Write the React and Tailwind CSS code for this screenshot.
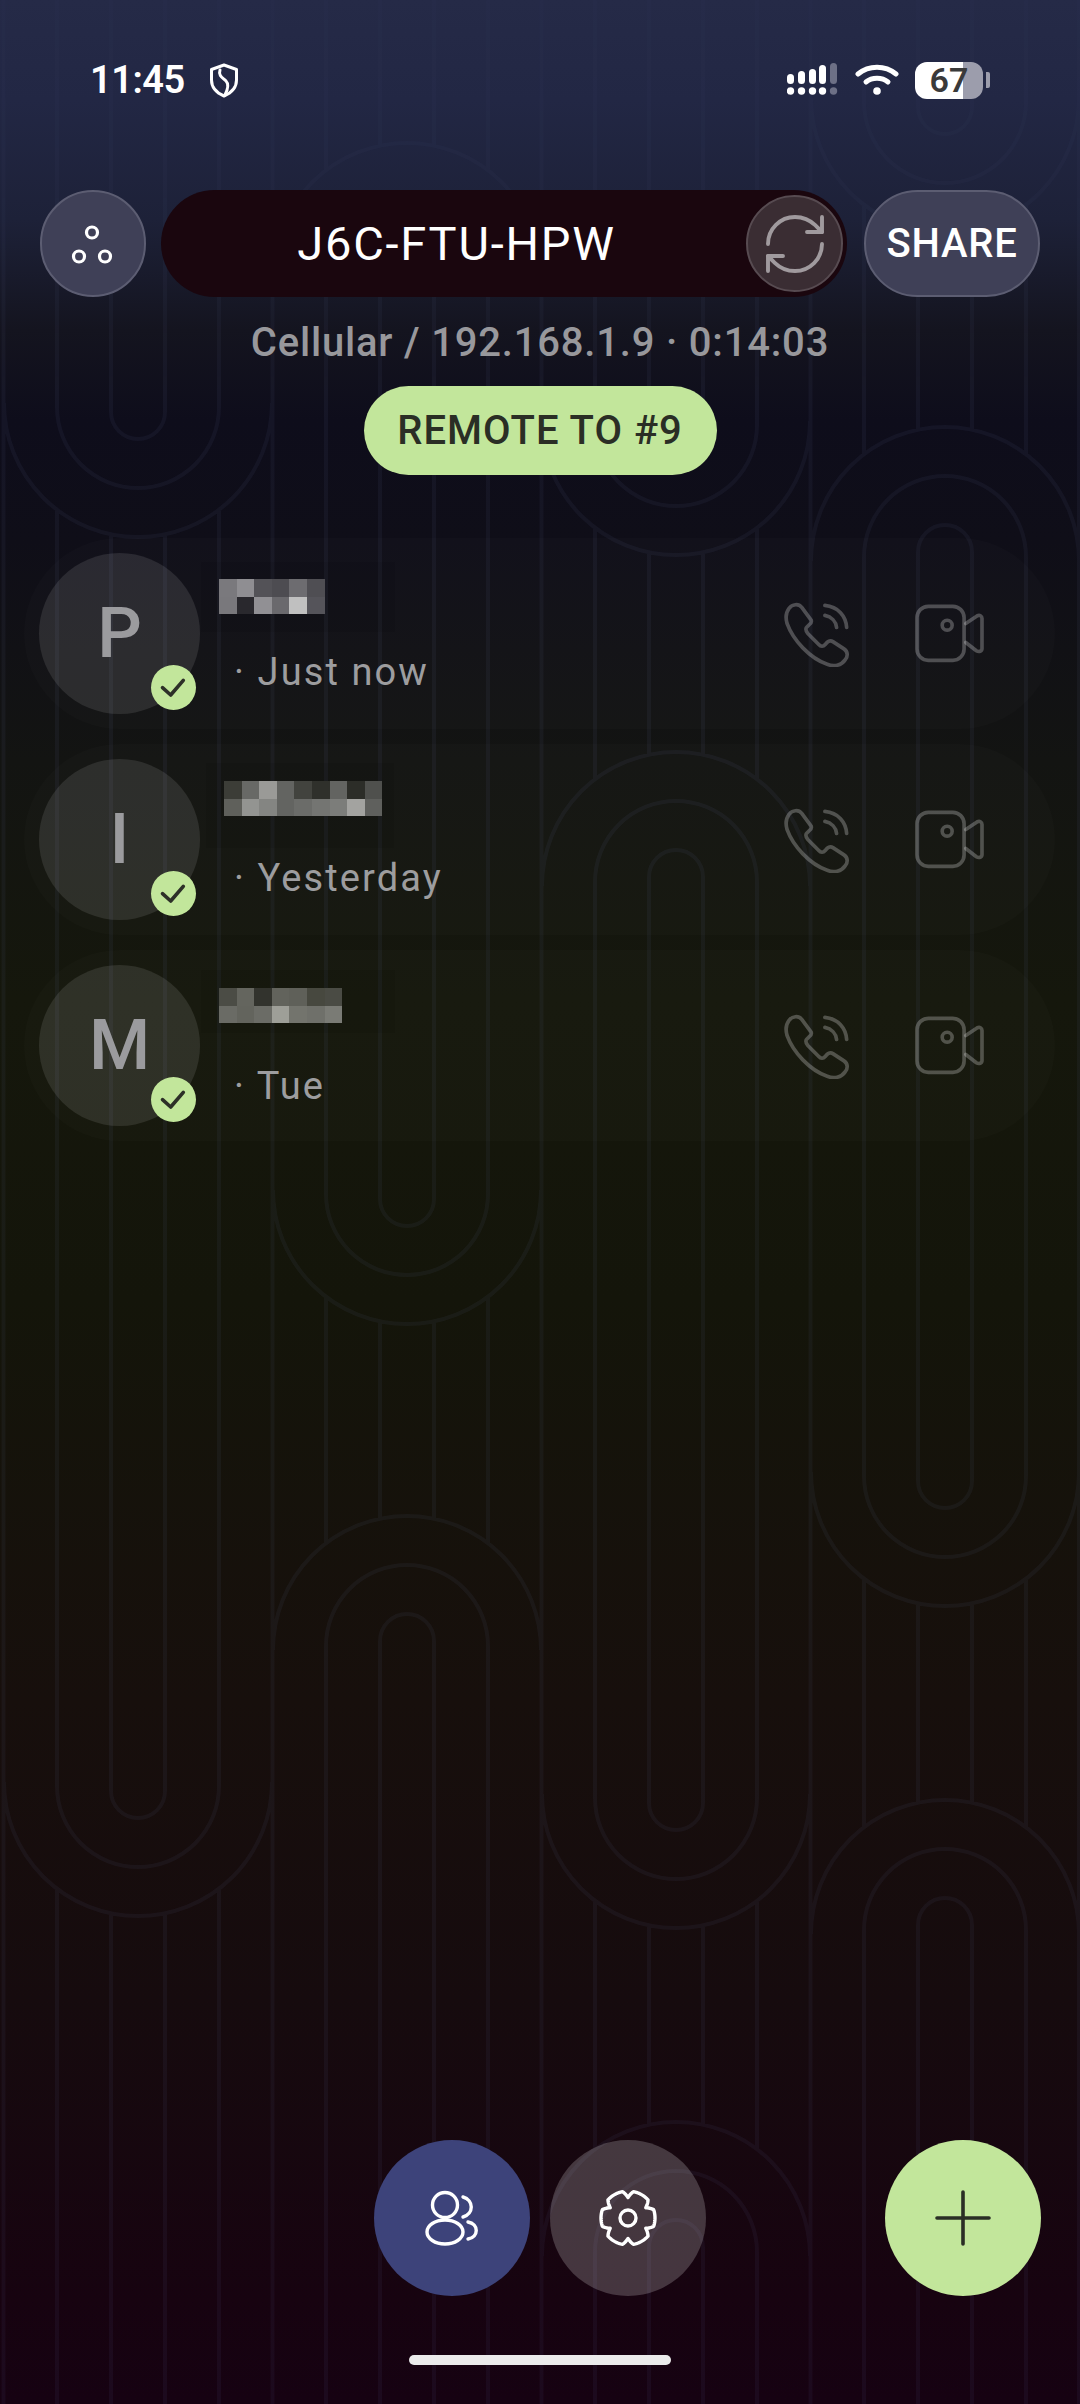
import { RefreshCw } from "lucide-react";

const PAGE_H = 2404;
const OUTER = 134;
// inner arcs are pulled up a little compared to the outer one
const ARCS = [
  { r: 134, k: 0 },
  { r: 81, k: 49 },
  { r: 27, k: 98 },
];
const COLUMNS = [
  { cx: 138, parts: [["U", 537], ["U", 1916]] },
  { cx: 407, parts: [["n", 143], ["U", 1324], ["n", 1516]] },
  { cx: 676, parts: [["U", 555], ["n", 752], ["U", 1928], ["n", 2122]] },
  { cx: 945, parts: [["U", 232], ["n", 427], ["U", 1606], ["n", 1800]] },
];

const buildPattern = () => {
  let d = "";
  [3.5, 272.5, 541.5, 810.5, 1079].forEach((x) => {
    d += `M${x} 0V${PAGE_H}`;
  });
  COLUMNS.forEach(({ cx, parts }) => {
    parts.forEach(([type, y]) => {
      ARCS.forEach(({ r, k }) => {
        const yc = type === "U" ? y - k - r : y + k + r;
        d += `M${cx - r} ${yc}A${r} ${r} 0 0 ${type === "U" ? 0 : 1} ${cx + r} ${yc}`;
      });
    });
    ARCS.slice(1).forEach(({ r, k }) => {
      const drop = OUTER - Math.sqrt(OUTER * OUTER - r * r);
      let cur = 0;
      parts.forEach(([type, y]) => {
        const end = type === "U" ? y - k - r : y + drop;
        d += `M${cx - r} ${cur}V${end}M${cx + r} ${cur}V${end}`;
        cur = type === "U" ? y - drop : y + k + r;
      });
      d += `M${cx - r} ${cur}V${PAGE_H}M${cx + r} ${cur}V${PAGE_H}`;
    });
  });
  return d;
};

const gearPath = () => {
  const pts = [];
  for (let i = 0; i < 180; i++) {
    const a = (i / 180) * Math.PI * 2;
    const r = Math.min(27, 20.5 + 11 * Math.abs(Math.cos(3 * a)));
    pts.push(`${(30 + r * Math.cos(a)).toFixed(2)} ${(30 + r * Math.sin(a)).toFixed(2)}`);
  }
  return `M${pts.join("L")}Z`;
};

const PhoneIcon = () => (
  <svg width="67" height="67" viewBox="130 180 200 200" fill="none" className="stroke-white/25" strokeWidth="11" strokeLinecap="round" strokeLinejoin="round">
    <path d="M148 205C158 192 176 190 186 202L214 240C216 246 214 250 208 254L200 262C196 268 198 272 204 280L236 312C243 320 250 320 256 313L262 306C268 301 274 301 280 305L312 326C324 334 324 348 316 358C304 376 282 380 262 372C210 354 160 300 142 250C137 232 138 218 148 205Z" />
    <path d="M255 196C295 200 318 228 320 262" />
    <path d="M255 226C275 230 288 244 290 262" />
  </svg>
);

const VideoIcon = () => (
  <svg width="72" height="63" viewBox="520 190 215 190" fill="none" className="stroke-white/25" strokeWidth="11" strokeLinecap="round" strokeLinejoin="round">
    <rect x="531" y="203" width="142" height="163" rx="34" />
    <circle cx="622" cy="260" r="15" />
    <path d="M678 255L712 232C720 228 727 232 727 240V330C727 338 718 342 710 337L678 312" />
  </svg>
);

const Pixels = ({ colors, cols, className }) => (
  <div className={`grid grid-rows-2 h-[35px] ${className}`} style={{ gridTemplateColumns: `repeat(${cols}, 17.6px)` }}>
    {colors.map((c, i) => (
      <div key={i} style={{ backgroundColor: c }} />
    ))}
  </div>
);

const contacts = [
  {
    letter: "P",
    when: "Just now",
    cols: 6,
    wrap: "ml-[1px] pl-[18px] pr-[70px] pt-[17px] pb-[18px] mt-[24px]",
    gap: "mt-[18px]",
    pixels: ["#7a797d", "#8f8e92", "#535257", "#4d4c51", "#6d6c70", "#4f4e53", "#79787c", "#29282d", "#919094", "#6a696d", "#c0c0c0", "#55545a"],
  },
  {
    letter: "I",
    when: "Yesterday",
    cols: 9,
    wrap: "ml-[6px] pl-[18px] pr-[12px] pt-[18px] pb-[32px] mt-[19px]",
    gap: "mt-[8px]",
    pixels: ["#3c3d37", "#686966", "#9a9a97", "#636461", "#42433e", "#2f302b", "#636461", "#2c2d28", "#4f504d", "#5f605b", "#939491", "#848582", "#636461", "#6b6c69", "#747572", "#7c7d7a", "#a3a3a0", "#5f605d"],
  },
  {
    letter: "M",
    when: "Tue",
    cols: 7,
    wrap: "ml-[1px] pl-[18px] pr-[53px] pt-[18px] pb-[10px] mt-[20px]",
    gap: "mt-[31px]",
    pixels: ["#4b4c45", "#64655e", "#32332d", "#62635c", "#5f6059", "#47483f", "#4a4b44", "#6a6b65", "#63645d", "#6b6c66", "#9e9f98", "#73746d", "#6f706a", "#7a7b75"],
  },
];

const ContactRow = ({ contact }) => (
  <div className="flex h-[191px] items-center rounded-full bg-white/[0.015] pl-[15px] pr-[70px]">
    <div className="relative flex h-[161px] w-[161px] shrink-0 items-center justify-center rounded-full bg-white/10 text-[70px] font-medium text-[#9b9b9e]">
      {contact.letter}
      <div className="absolute bottom-[4px] right-[4px] h-[45px] w-[45px] rounded-full bg-[#c2e69b]">
        <svg width="45" height="45" viewBox="0 0 45 45" fill="none" stroke="#2d3028" strokeWidth="3.6" strokeLinecap="round" strokeLinejoin="round">
          <path d="M11.5 22.7L19.7 30L32.3 15.3" />
        </svg>
      </div>
    </div>
    <div className="flex h-full flex-col self-start">
      <div className={`w-fit bg-black/[0.07] ${contact.wrap}`}>
        <Pixels colors={contact.pixels} cols={contact.cols} />
      </div>
      <div className={`${contact.gap} ml-[34px] text-[38px] leading-[45px] tracking-[2.1px] text-[#9d9d9f]`}>
        · {contact.when}
      </div>
    </div>
    <div className="ml-auto flex items-center gap-[63px]">
      <PhoneIcon />
      <VideoIcon />
    </div>
  </div>
);

const StatusBar = () => (
  <div className="flex h-[40px] items-center justify-between pl-[90px] pr-[90px] text-white">
    <div className="flex items-center gap-[24px]">
      <span className="text-[38px] font-semibold leading-none tracking-[-0.5px]">11:45</span>
      <svg width="30" height="35" viewBox="0 0 30 35" fill="none" stroke="#fff" strokeWidth="3" strokeLinejoin="round" strokeLinecap="round">
        <path d="M15 2L27.5 6.5V17C27.5 25 22 30 15 33C8 30 2.5 25 2.5 17V6.5Z" />
        <path d="M11 7C9 13 14 15 17 18C20 21 19 26 16 32" />
      </svg>
    </div>
    <div className="flex items-center">
      <svg width="52" height="34" viewBox="0 0 52 34">
        <g fill="#fff">
          <rect x="0" y="11" width="7" height="10" rx="3.5" />
          <rect x="11" y="8" width="7" height="13" rx="3.5" />
          <rect x="22" y="6" width="7" height="15" rx="3.5" />
          <rect x="32" y="2" width="7" height="19" rx="3.5" />
          <circle cx="3.5" cy="28" r="3.7" />
          <circle cx="14.5" cy="28" r="3.7" />
          <circle cx="25.5" cy="28" r="3.7" />
          <circle cx="35.5" cy="28" r="3.7" />
        </g>
        <g fill="#6d7086">
          <rect x="43" y="0" width="7" height="21" rx="3.5" />
          <circle cx="46.5" cy="28" r="3.7" />
        </g>
      </svg>
      <svg width="44" height="34" viewBox="0 0 44 34" className="ml-[16px]" fill="none" stroke="#fff" strokeWidth="5" strokeLinecap="round">
        <path d="M3 11C14 2 30 2 41 11" />
        <path d="M11 19C17 14 27 14 33 19" />
        <circle cx="22" cy="28" r="3.8" fill="#fff" stroke="none" />
      </svg>
      <div className="ml-[16px] flex h-[37px] w-[68px] items-center justify-center rounded-[12px] bg-[linear-gradient(90deg,#fff_48px,#9c9dac_48px)]">
        <span className="text-[34px] font-semibold leading-none text-[#3a3a3a]">67</span>
      </div>
      <div className="ml-[3px] h-[16px] w-[4px] rounded-r-[2px] bg-[#9c9dac]" />
    </div>
  </div>
);

const App = () => {
  return (
    <div className="relative flex h-[2404px] w-[1080px] flex-col overflow-hidden bg-[linear-gradient(180deg,#252a47_0px,#222744_100px,#1d2138_220px,#14141f_330px,#0e0d1b_420px,#0f0e18_540px,#131412_760px,#15170c_1000px,#14150a_1300px,#170f0c_1700px,#160b0e_2000px,#170310_2300px,#160212_2404px)] font-[Roboto,sans-serif]">
      <svg width="1080" height="2404" className="pointer-events-none absolute inset-0 [mask-image:linear-gradient(180deg,rgba(0,0,0,0.25)_0px,rgba(0,0,0,0.5)_200px,#000_400px)]" fill="none" stroke="#a0aaff" strokeOpacity="0.05" strokeWidth="4">
        <path d={buildPattern()} />
      </svg>

      <div className="relative flex h-full flex-col">
        <div className="pt-[60px]">
          <StatusBar />
        </div>

        <div className="mt-[90px] flex items-center pl-[40px]">
          <button className="flex h-[107px] w-[106px] items-center justify-center rounded-full border-2 border-[#5c5d72] bg-[#3f4057]">
            <svg width="50" height="50" viewBox="0 0 50 50" fill="none" stroke="#fff" strokeWidth="3.2">
              <circle cx="24" cy="13.5" r="5.5" />
              <circle cx="11" cy="37.5" r="5.5" />
              <circle cx="37" cy="37.5" r="5.5" />
            </svg>
          </button>
          <div className="ml-[15px] flex h-[107px] w-[686px] items-center rounded-full bg-[#1a060e] pr-[4px]">
            <div className="flex-1 pl-[6px] text-center text-[47px] leading-none tracking-[1.8px] text-white">J6C-FTU-HPW</div>
            <button className="flex h-[97px] w-[97px] items-center justify-center rounded-full border-2 border-[#574b51] bg-[#3a2d33]">
              <RefreshCw size={72} strokeWidth={1.3} color="#a09a9e" />
            </button>
          </div>
          <button className="ml-[17px] flex h-[107px] w-[176px] items-center justify-center rounded-full border-2 border-[#5c5d72] bg-[#3f4057] text-[40px] font-medium tracking-[0.8px] text-white">
            SHARE
          </button>
        </div>

        <div className="mt-[23px] text-center text-[40px] font-medium leading-[46px] tracking-[0.8px] text-[#98989c]">
          Cellular / 192.168.1.9 · 0:14:03
        </div>

        <div className="mt-[20px] flex justify-center">
          <button className="flex h-[89px] w-[353px] items-center justify-center rounded-full bg-[#c2e69b] text-[40px] font-medium tracking-[1px] text-[#2a2e25]">
            REMOTE TO #9
          </button>
        </div>

        <div className="ml-[24px] mt-[63px] flex w-[1031px] flex-col gap-[15px]">
          {contacts.map((contact) => (
            <ContactRow key={contact.letter} contact={contact} />
          ))}
        </div>

        <div className="mt-auto pb-[39px]">
          <div className="flex items-center pl-[374px]">
            <button className="flex h-[156px] w-[156px] items-center justify-center rounded-full bg-[#3d437a]">
              <svg width="60" height="60" viewBox="0 0 60 60" fill="none" stroke="#fff" strokeWidth="3.4" strokeLinecap="round">
                <circle cx="23" cy="17" r="12.5" />
                <ellipse cx="23" cy="44" rx="18" ry="12" />
                <path d="M41 9C52 12 52 26 41 29" />
                <path d="M46 34C57 36 57 49 46 51" />
              </svg>
            </button>
            <button className="ml-[20px] flex h-[156px] w-[156px] items-center justify-center rounded-full bg-white/20">
              <svg width="60" height="60" viewBox="0 0 60 60" fill="none" stroke="#fff" strokeWidth="3.4" strokeLinejoin="round">
                <path d={gearPath()} />
                <circle cx="30" cy="30" r="8" />
              </svg>
            </button>
            <button className="ml-[179px] flex h-[156px] w-[156px] items-center justify-center rounded-full bg-[#c2e69b]">
              <svg width="60" height="60" viewBox="0 0 60 60" fill="none" stroke="#2a2e25" strokeWidth="3.6" strokeLinecap="round">
                <path d="M30 4V56M4 30H56" />
              </svg>
            </button>
          </div>
          <div className="mx-auto mt-[59px] h-[10px] w-[262px] rounded-full bg-[#ebebeb]" />
        </div>
      </div>
    </div>
  );
};

export default App;
